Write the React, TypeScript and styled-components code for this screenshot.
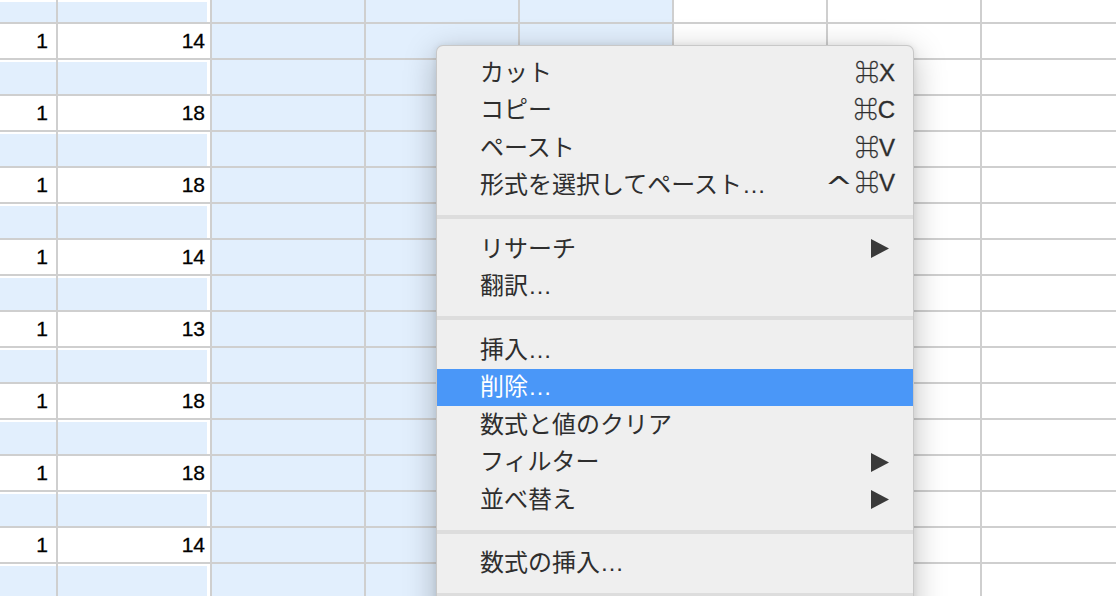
import React from "react";
import styled, { createGlobalStyle } from "styled-components";

const GlobalStyle = createGlobalStyle`
  html, body {
    margin: 0;
    padding: 0;
    background: #fff;
  }
  body {
    width: 1116px;
    height: 596px;
    overflow: hidden;
  }
`;

const rows: [string, string][] = [
  ["1", "14"],
  ["1", "18"],
  ["1", "18"],
  ["1", "14"],
  ["1", "13"],
  ["1", "18"],
  ["1", "18"],
  ["1", "14"],
];

type MenuEntry =
  | { sep: true }
  | {
      label: string;
      shortcut?: string;
      ctrl?: boolean;
      sub?: boolean;
      active?: boolean;
    };

const menu: MenuEntry[] = [
  { label: "カット", shortcut: "⌘X" },
  { label: "コピー", shortcut: "⌘C" },
  { label: "ペースト", shortcut: "⌘V" },
  { label: "形式を選択してペースト…", shortcut: "⌘V", ctrl: true },
  { sep: true },
  { label: "リサーチ", sub: true },
  { label: "翻訳…" },
  { sep: true },
  { label: "挿入…" },
  { label: "削除…", active: true },
  { label: "数式と値のクリア" },
  { label: "フィルター", sub: true },
  { label: "並べ替え", sub: true },
  { sep: true },
  { label: "数式の挿入…" },
  { sep: true },
];

export default function App() {
  const cells: React.ReactNode[] = [];
  // one partial row on top, then 8 pairs of (number row, blank row)
  const pushRow = (nums: [string, string] | null, key: string) => {
    cells.push(
      nums ? (
        <NumCell key={key + "a"} $pad={8}>
          {nums[0]}
        </NumCell>
      ) : (
        <BlankCell key={key + "a"} $right={0}>
          <Fill />
        </BlankCell>
      )
    );
    cells.push(
      nums ? (
        <NumCell key={key + "b"} $pad={5}>
          {nums[1]}
        </NumCell>
      ) : (
        <BlankCell key={key + "b"} $right={3}>
          <Fill />
        </BlankCell>
      )
    );
    for (let c = 0; c < 6; c++) {
      cells.push(<Cell key={key + c} $selected={c < 3} />);
    }
  };
  pushRow(null, "r0");
  rows.forEach((r, i) => {
    pushRow(r, `n${i}`);
    pushRow(null, `b${i}`);
  });

  return (
    <Page>
      <GlobalStyle />
      <Sheet>{cells}</Sheet>
      <Menu>
        {menu.map((m, i) =>
          "sep" in m ? (
            <Separator key={i} />
          ) : (
            <Item key={i} $active={!!m.active}>
              <Label>{m.label}</Label>
              {m.shortcut && (
                <Shortcut>
                  {m.ctrl && <Caret>^</Caret>}
                  {m.shortcut}
                </Shortcut>
              )}
              {m.sub && (
                <Arrow width="18" height="19" viewBox="0 0 18 19">
                  <polygon points="0,0 18,9.5 0,19" fill="#3a3a3a" />
                </Arrow>
              )}
            </Item>
          )
        )}
      </Menu>
    </Page>
  );
}

const Page = styled.div`
  position: relative;
  width: 1116px;
  height: 596px;
  overflow: hidden;
`;

const Sheet = styled.div`
  display: grid;
  grid-template-columns: 56px repeat(7, 152px);
  grid-template-rows: 22px repeat(16, 34px);
  gap: 2px;
  width: max-content;
  background: #cfcfcf;
`;

const Cell = styled.div<{ $selected?: boolean }>`
  background: ${(p) => (p.$selected ? "#e2effd" : "#ffffff")};
`;

const NumCell = styled.div<{ $pad: number }>`
  background: #fff;
  display: flex;
  align-items: center;
  justify-content: flex-end;
  padding-right: ${(p) => p.$pad}px;
  font-family: "Liberation Sans", Arial, sans-serif;
  font-size: 21px;
  color: #000;
  -webkit-text-stroke: 0.3px #000;
`;

const BlankCell = styled.div<{ $right: number }>`
  background: #fff;
  display: flex;
  padding: 2px ${(p) => p.$right}px 0 0;
`;

const Fill = styled.div`
  flex: 1;
  background: #e2effd;
`;

const Menu = styled.div`
  position: absolute;
  left: 436px;
  top: 45px;
  width: 478px;
  height: 580px;
  box-sizing: border-box;
  padding-top: 8px;
  background: #efefef;
  border: 1px solid rgba(0, 0, 0, 0.16);
  border-radius: 7px 7px 0 0;
  box-shadow: 0 8px 32px rgba(0, 0, 0, 0.26), 0 0 6px rgba(0, 0, 0, 0.08);
  font-family: "Liberation Sans", "Noto Sans CJK JP", "DejaVu Sans", sans-serif;
`;

const Item = styled.div<{ $active: boolean }>`
  display: flex;
  align-items: center;
  height: 37.5px;
  padding: 0 18px 0 43px;
  font-size: 24px;
  line-height: 1;
  color: ${(p) => (p.$active ? "#ffffff" : "#2e2e2e")};
  background: ${(p) => (p.$active ? "#4a97f8" : "transparent")};
`;

const Label = styled.span`
  flex: 1;
  white-space: nowrap;
`;

const Shortcut = styled.span`
  display: flex;
  align-items: flex-start;
  white-space: nowrap;
  -webkit-text-stroke: 0.3px currentColor;
`;

const Caret = styled.span`
  font-family: "DejaVu Sans", sans-serif;
  font-size: 28px;
  line-height: 22px;
  margin-top: 6px;
  margin-right: 5px;
  transform: scaleX(1.2);
  -webkit-text-stroke: 0;
`;

const Arrow = styled.svg`
  margin-right: 6px;
`;

const Separator = styled.div`
  height: 4px;
  margin: 11px 0;
  background: #dddddd;
`;
